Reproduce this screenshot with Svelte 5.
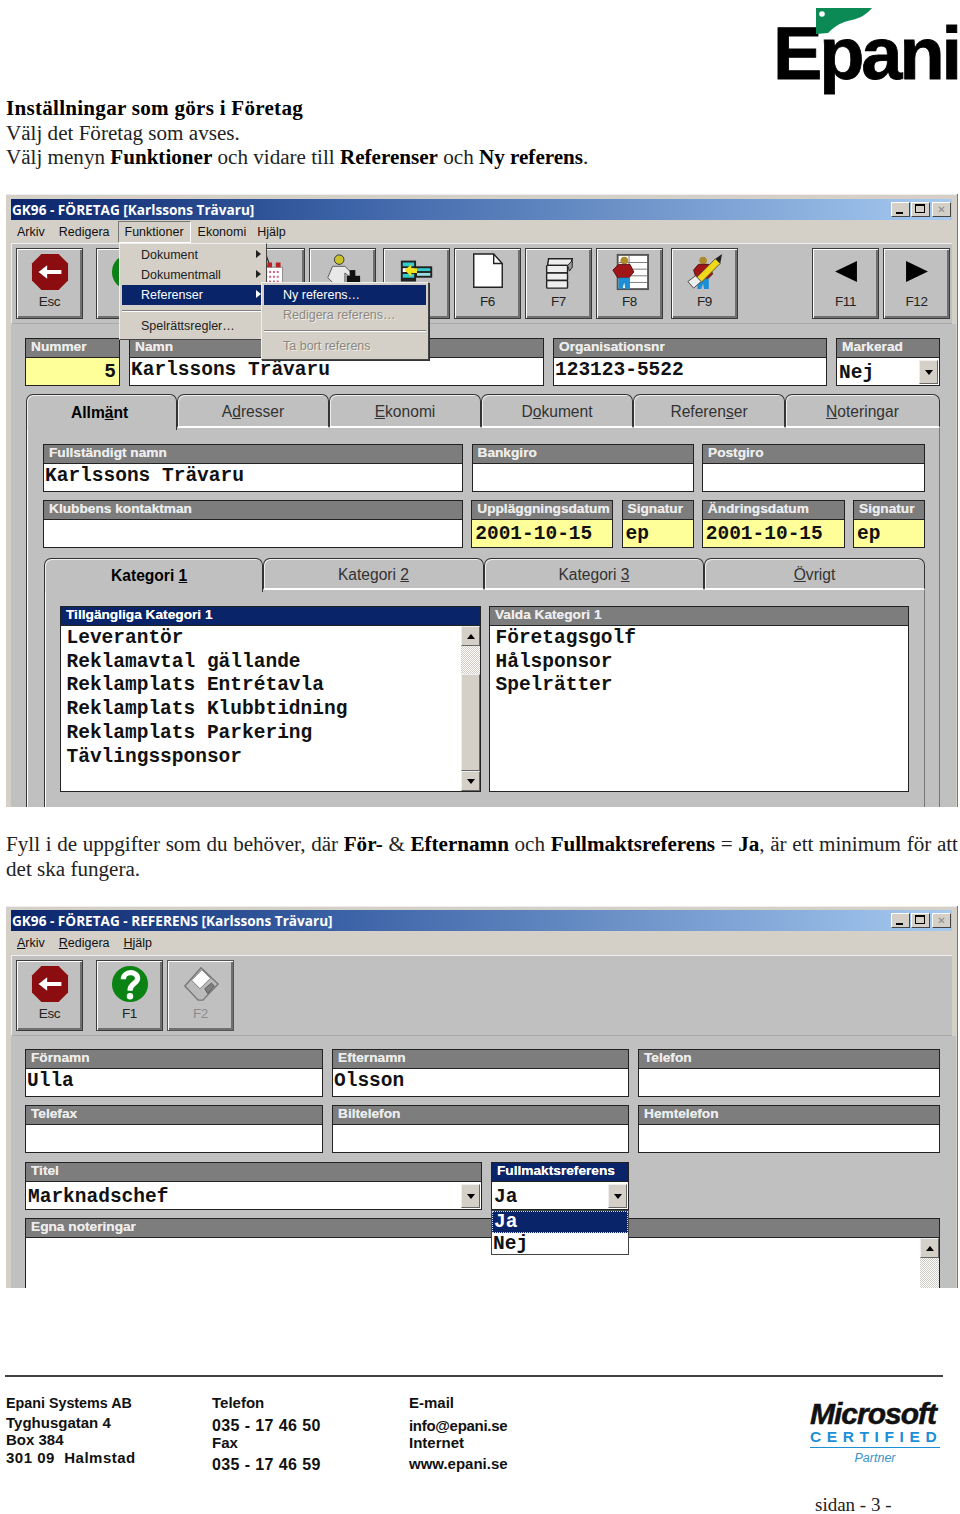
<script>
  const tb1 = [
    { k: 'Esc', i: 'esc', c: '' }, { k: '', i: 'help', c: 'sep' }, { k: '', i: 'disk', c: 'dis' },
    { k: '', i: 'cal', c: '' }, { k: '', i: 'man', c: '' }, { k: '', i: 'grid', c: 'm7' },
    { k: 'F6', i: 'page', c: '' }, { k: 'F7', i: 'stack', c: '' }, { k: 'F8', i: 'tbl', c: '' },
    { k: 'F9', i: 'pen', c: 'm4' }, { k: 'F11', i: 'left', c: 'far' }, { k: 'F12', i: 'right', c: '' }
  ];
  const tb2 = [
    { k: 'Esc', i: 'esc', c: '' }, { k: 'F1', i: 'help', c: 'sep' }, { k: 'F2', i: 'disk', c: 'dis' }
  ];
  const avail = ['Leverantör', 'Reklamavtal gällande', 'Reklamplats Entrétavla', 'Reklamplats Klubbtidning', 'Reklamplats Parkering', 'Tävlingssponsor'];
  const chosen = ['Företagsgolf', 'Hålsponsor', 'Spelrätter'];
</script>

{#snippet icon(n)}
  <svg class="ico" viewBox="0 0 40 40" aria-hidden="true">
    {#if n === 'esc'}
      <polygon points="11,1 29,1 39,11 39,29 29,39 11,39 1,29 1,11" fill="#8b0d10" />
      <path d="M8 20 L17 13 V18 H32 V22 H17 V27 Z" fill="#fff" />
    {:else if n === 'help'}
      <circle cx="20" cy="20" r="19" fill="#0b8214" />
      <path d="M13 15 C13 6 28 6 28 14 C28 20 20 19 20 27" fill="none" stroke="#fff" stroke-width="5.5" />
      <circle cx="20" cy="33" r="3.4" fill="#fff" />
    {:else if n === 'disk'}
      <polygon points="20,3 38,20 22,37 17,37 3,22" fill="#bbb" stroke="#777" stroke-width="1.5" />
      <polygon points="21,5 30,14 19,25 10,16" fill="#fff" stroke="#777" />
      <polygon points="24,25 31,19 34,22 27,30" fill="#808080" stroke="#555" />
    {:else if n === 'cal'}
      <path d="M4 3 H14 L18 14 H6 Z" fill="#ddd" stroke="#333" stroke-width="1.5" />
      <rect x="7" y="15" width="24" height="18" fill="#fff" stroke="#888" />
      <path d="M9 20 H29 M9 25 H29 M9 30 H29" stroke="#d35a7a" stroke-width="2" stroke-dasharray="2 2" />
      <rect x="15" y="10" width="5" height="5" fill="#b22" /><rect x="24" y="10" width="5" height="5" fill="#b22" />
    {:else if n === 'man'}
      <circle cx="16" cy="7" r="5" fill="#c9c22a" stroke="#333" />
      <path d="M9 14 H22 L30 22 L27 25 L22 21 V32 H10 L4 26 Z" fill="#e8e8e8" stroke="#555" />
      <rect x="12" y="31" width="12" height="7" fill="#3c7fd0" />
      <rect x="24" y="24" width="14" height="14" fill="#111" /><rect x="27" y="18" width="6" height="7" fill="#111" />
    {:else if n === 'grid'}
      <rect x="3" y="8" width="16" height="22" fill="#222" />
      <rect x="5" y="10" width="12" height="4" fill="#3cc" /><rect x="5" y="16" width="12" height="4" fill="#fff" /><rect x="5" y="22" width="12" height="4" fill="#3cc" />
      <rect x="18" y="14" width="18" height="12" fill="#222" />
      <rect x="20" y="16" width="14" height="3" fill="#3cc" /><rect x="20" y="21" width="14" height="3" fill="#9dd" />
      <path d="M7 18 L14 12 V16 H20 V21 H14 V25 Z" fill="#f2e21c" />
    {:else if n === 'page'}
      <path d="M5 1 H26 L35 11 V36 H5 Z" fill="#fff" stroke="#222" stroke-width="1.5" />
      <path d="M26 1 V11 H35" fill="none" stroke="#222" stroke-width="1.5" />
    {:else if n === 'stack'}
      <path d="M9 6 H34 L32 13 H8 Z" fill="#eee" stroke="#222" stroke-width="1.5" />
      <rect x="7" y="13" width="22" height="8" rx="1" fill="#eee" stroke="#222" stroke-width="1.5" />
      <rect x="7" y="21" width="22" height="8" rx="1" fill="#eee" stroke="#222" stroke-width="1.5" />
      <rect x="7" y="29" width="22" height="8" rx="1" fill="#eee" stroke="#222" stroke-width="1.5" />
      <path d="M29 13 L34 8 V15 L31 19 Z" fill="#999" stroke="#222" />
    {:else if n === 'tbl'}
      <rect x="6" y="1" width="34" height="38" fill="#555" />
      <rect x="8" y="3" width="30" height="34" fill="#fff" />
      <path d="M8 10 H38 M8 17 H38 M8 24 H38 M8 31 H38 M19 3 V37" stroke="#777" />
      <circle cx="14" cy="8" r="4" fill="#b08a2a" />
      <path d="M2 18 L8 12 H20 L24 20 L19 26 H7 Z" fill="#a01518" stroke="#511" />
      <path d="M8 26 H20 V38 H15 L14 31 L12 38 H8 Z" fill="#1b8fd6" />
    {:else if n === 'pen'}
      <circle cx="18" cy="8" r="4" fill="#b08a2a" />
      <path d="M8 18 L13 12 H24 L28 22 L23 27 H11 Z" fill="#a01518" stroke="#511" />
      <path d="M12 27 H24 V38 H19 L18 32 L16 38 H12 Z" fill="#1b8fd6" />
      <path d="M11 26 L31 6 L36 11 L16 31 Z" fill="#f2d81c" stroke="#553" />
      <path d="M31 6 L38 1 L36 11 Z" fill="#222" />
      <path d="M2 30 L10 24 L16 30 L8 37 Z" fill="#eee" stroke="#444" />
    {:else if n === 'left'}
      <polygon points="8.5,19.5 31.5,8.5 31.5,30.5" fill="#000" />
    {:else if n === 'right'}
      <polygon points="8.5,8.5 31.5,19.5 8.5,30.5" fill="#000" />
    {/if}
  </svg>
{/snippet}

{#snippet toolbar(items)}
  <div class="toolbar">
    {#each items as b}
      <div class="btn {b.c}">
        {@render icon(b.i)}
        {#if b.k}<span class="key">{b.k}</span>{/if}
      </div>
    {/each}
  </div>
{/snippet}

{#snippet titlebar(t)}
  <div class="title">
    <span>{t}</span>
    <div class="caps">
      <span class="cap"><i class="c-min"></i></span>
      <span class="cap"><i class="c-max"></i></span>
      <span class="cap x">✕</span>
    </div>
  </div>
{/snippet}

{#snippet arrow()}
  <span class="drop"><i></i></span>
{/snippet}

{#snippet field(label, value = '', cls = '')}
  <div class="field {cls}">
    <div class="lab">{label}</div>
    <div class="val">{value}</div>
  </div>
{/snippet}

<div class="page">
  <header class="head">
    <div class="logo">
      <svg class="flag" viewBox="0 0 56 26" aria-hidden="true">
        <path d="M0 0 H56 C50 7 44 10 36 12 C26 14 20 17 12 25 L0 26 Z" fill="#0c8a55" />
        <circle cx="6" cy="6" r="2.8" fill="#fff" />
      </svg>
      <span class="logotext">Epani</span>
    </div>
  </header>

  <div class="prose intro">
    <div class="lead"><b>Inställningar som görs i Företag</b></div>
    <div>Välj det Företag som avses.</div>
    <div>Välj menyn <b>Funktioner</b> och vidare till <b>Referenser</b> och <b>Ny referens</b>.</div>
  </div>

  <section class="win w1">
    {@render titlebar('GK96 - FÖRETAG [Karlssons Trävaru]')}
    <div class="menubar">
      <span>Arkiv</span><span>Redigera</span><span class="open">Funktioner</span><span class="eko">Ekonomi</span><span>Hjälp</span>
    </div>
    {@render toolbar(tb1)}

    <div class="body">
      <div class="row r-top">
        {@render field('Nummer', '5', 'yellow right')}
        {@render field('Namn', 'Karlssons Trävaru')}
        {@render field('Organisationsnr', '123123-5522')}
        <div class="field">
          <div class="lab">Markerad</div>
          <div class="val combo">Nej{@render arrow()}</div>
        </div>
      </div>

      <div class="tabs big">
        <div class="tab on"><span>Allm<u>ä</u>nt</span></div>
        <div class="tab"><span>A<u>d</u>resser</span></div>
        <div class="tab"><span><u>E</u>konomi</span></div>
        <div class="tab"><span>D<u>o</u>kument</span></div>
        <div class="tab"><span>Referen<u>s</u>er</span></div>
        <div class="tab"><span><u>N</u>oteringar</span></div>
      </div>
      <div class="tabpanel outer">
        <div class="row r-a">
          {@render field('Fullständigt namn', 'Karlssons Trävaru')}
          {@render field('Bankgiro')}
          {@render field('Postgiro')}
        </div>
        <div class="row r-b">
          {@render field('Klubbens kontaktman')}
          {@render field('Uppläggningsdatum', '2001-10-15', 'yellow')}
          {@render field('Signatur', 'ep', 'yellow')}
          {@render field('Ändringsdatum', '2001-10-15', 'yellow')}
          {@render field('Signatur', 'ep', 'yellow')}
        </div>
        <div class="tabs small">
          <div class="tab on"><span>Kategori <u>1</u></span></div>
          <div class="tab"><span>Kategori <u>2</u></span></div>
          <div class="tab"><span>Kategori <u>3</u></span></div>
          <div class="tab"><span><u>Ö</u>vrigt</span></div>
        </div>
        <div class="tabpanel inner">
          <div class="lists">
            <div class="list">
              <div class="lab navy">Tillgängliga Kategori 1</div>
              <div class="listbody">
                <div class="items">
                  {#each avail as a}<div>{a}</div>{/each}
                </div>
                <div class="scroll">
                  <span class="sb"><i class="up"></i></span>
                  <span class="dither d1"></span>
                  <span class="thumb"></span>
                  <span class="sb"><i></i></span>
                </div>
              </div>
            </div>
            <div class="list">
              <div class="lab">Valda Kategori 1</div>
              <div class="listbody">
                <div class="items">
                  {#each chosen as a}<div>{a}</div>{/each}
                </div>
              </div>
            </div>
          </div>
        </div>
      </div>
    </div>

    <div class="menu m-main">
      <div class="mi">Dokument<i class="tri"></i></div>
      <div class="mi">Dokumentmall<i class="tri"></i></div>
      <div class="mi sel">Referenser<i class="tri"></i></div>
      <hr />
      <div class="mi">Spelrättsregler…</div>
    </div>
    <div class="menu m-sub">
      <div class="mi sel">Ny referens…</div>
      <div class="mi off">Redigera referens…</div>
      <hr />
      <div class="mi off">Ta bort referens</div>
    </div>
  </section>

  <div class="prose second">
    <div class="just">Fyll i de uppgifter som du behöver, där <b>För-</b> &amp; <b>Efternamn</b> och <b>Fullmaktsreferens</b> = <b>Ja</b>, är ett minimum för att</div>
    <div>det ska fungera.</div>
  </div>

  <section class="win w2">
    {@render titlebar('GK96 - FÖRETAG - REFERENS [Karlssons Trävaru]')}
    <div class="menubar tall">
      <span><u>A</u>rkiv</span><span><u>R</u>edigera</span><span><u>H</u>jälp</span>
    </div>
    {@render toolbar(tb2)}

    <div class="body b2">
      <div class="row r-3">
        {@render field('Förnamn', 'Ulla')}
        {@render field('Efternamn', 'Olsson')}
        {@render field('Telefon')}
      </div>
      <div class="row r-3 r-3b">
        {@render field('Telefax')}
        {@render field('Biltelefon')}
        {@render field('Hemtelefon')}
      </div>
      <div class="row r-2">
        <div class="field">
          <div class="lab">Titel</div>
          <div class="val combo">Marknadschef{@render arrow()}</div>
        </div>
        <div class="field dd-host">
          <div class="lab navy">Fullmaktsreferens</div>
          <div class="val combo">Ja{@render arrow()}</div>
          <div class="ddlist">
            <div class="ddsel">Ja</div>
            <div>Nej</div>
          </div>
        </div>
      </div>
      <div class="field notes">
        <div class="lab">Egna noteringar</div>
        <div class="val notesbody">
          <div class="scroll s2">
            <span class="sb"><i class="up"></i></span>
            <span class="dither"></span>
          </div>
        </div>
      </div>
    </div>
  </section>

  <hr class="rule" />
  <footer class="foot">
    <div class="col c1">
      <div class="co">Epani Systems AB</div>
      <div>Tyghusgatan 4</div>
      <div>Box 384</div>
      <div class="city">301 09&nbsp; Halmstad</div>
    </div>
    <div class="col c2">
      <div>Telefon</div>
      <div class="num">035 - 17 46 50</div>
      <div>Fax</div>
      <div class="num">035 - 17 46 59</div>
    </div>
    <div class="col c2">
      <div>E-mail</div>
      <div class="mail">info@epani.se</div>
      <div>Internet</div>
      <div>www.epani.se</div>
    </div>
    <div class="ms">
      <div class="ms-name">Microsoft</div>
      <div class="ms-cert">CERTIFIED</div>
      <div class="ms-part">Partner</div>
    </div>
  </footer>
  <div class="sidan">sidan - 3 -</div>
</div>

<style>
  :global(body) { margin: 0; background: #fff; }
  .page { width: 960px; height: 1514px; overflow: hidden; position: relative; font-family: "Liberation Sans", Arial, sans-serif; color: #000; }

  .head { height: 96px; box-sizing: border-box; padding: 7px 2px 0 0; display: flex; justify-content: flex-end; }
  .logo { position: relative; width: 184px; height: 89px; }
  .logotext { display: block; font: bold 74px/89px "Liberation Sans", Arial, sans-serif; letter-spacing: -3.1px; padding-top: 2px; margin-left: -1px; white-space: nowrap; -webkit-text-stroke: .8px #000; }
  .flag { position: absolute; left: 42px; top: 1px; width: 56px; height: 26px; z-index: 1; }

  .prose { font: 21.1px/24.5px "Liberation Serif", "Times New Roman", serif; color: #222; padding-left: 6px; width: 952px; }
  .prose b { color: #000; }
  .lead { letter-spacing: .26px; }
  .intro { height: 73px; margin-bottom: 25px; }
  .second { margin-top: 25px; height: 48px; }
  .just { text-align: justify; text-align-last: justify; white-space: nowrap; }

  .win { position: relative; margin-left: 6px; width: 952px; box-sizing: border-box; background: #d4d0c8; padding: 5px 1px 0 5px; overflow: hidden; border-right: 1px solid #777; box-shadow: inset 0 1px 0 #eee; }
  .w1 { height: 613px; }
  .w2 { height: 382px; margin-top: 26px; padding-top: 4px; }

  .title { height: 21px; margin-right: 4px; background: linear-gradient(90deg, #0a246a 0%, #3b62a6 35%, #a6caf0 100%); color: #fff; font: bold 13.6px/21px "Open Sans", "DejaVu Sans", sans-serif; padding-left: 1px; display: flex; justify-content: space-between; align-items: center; white-space: nowrap; }
  .caps { display: flex; gap: 1px; margin-right: 1px; }
  .cap { width: 19px; height: 15px; box-sizing: border-box; background: #d4d0c8; border: 1px solid; border-color: #fff #444 #444 #fff; position: relative; display: flex; align-items: center; justify-content: center; font: 10px/1 "DejaVu Sans", sans-serif; color: #000; }
  .cap.x { color: #8a8a8a; margin-left: 1px; }
  .c-min { position: absolute; left: 4px; bottom: 2px; width: 7px; height: 2px; background: #000; }
  .c-max { position: absolute; left: 3px; top: 1px; width: 10px; height: 9px; box-sizing: border-box; border: 1px solid #000; border-top-width: 2px; }

  .menubar { height: 23px; display: flex; align-items: center; font-size: 12.5px; color: #111; background: #d4d0c8; }
  .menubar.tall { height: 24px; }
  .menubar span { padding: 0 7px; line-height: 22px; }
  .menubar span:first-child { margin-left: -1px; }
  .menubar .open { box-sizing: border-box; height: 22px; margin: 1px 0 0 1px; border: 1px solid; border-color: #777 #fff #fff #777; padding: 0 6px; line-height: 21px; }
  .menubar .eko { padding-right: 4px; }

  .toolbar { height: 81px; box-sizing: border-box; background: #c0c0c0; border-top: 1px solid #eee; border-bottom: 1px solid #aaa; border-left: 1px solid #eee; margin-right: 4px; padding: 4px 0 0 4px; display: flex; gap: 4px; }
  .btn { width: 67px; height: 71px; box-sizing: border-box; flex: none; background: #c0c0c0; border: 1px solid #3a3a3a; box-shadow: inset 1px 1px 0 #fff, inset -2px -2px 0 #6f6f6f; display: flex; flex-direction: column; align-items: center; padding-top: 4px; }
  .btn.sep { margin-left: 9px; }
  .btn.m7 { margin-left: 3px; }
  .btn.m4 { margin-left: 4px; }
  .btn.far { margin-left: 70px; }
  .ico { width: 38px; height: 38px; flex: none; }
  .key { font-size: 13.5px; line-height: 18px; margin-top: 2px; color: #222; letter-spacing: -.4px; }
  .btn.dis .key { color: #8c8c8c; }
  .btn.dis { border-color: #555; }

  .body { background: #c0c0c0; padding: 14px 0 0 14px; height: 483px; box-sizing: border-box; }
  .b2 { height: 252px; padding-top: 13px; overflow: hidden; }

  .row { display: grid; column-gap: 9px; }
  .r-top { grid-template-columns: 95px 415px 274px 104px; margin-bottom: 8px; }
  .r-a { grid-template-columns: 420px 222px 223px; column-gap: 8.5px; margin-bottom: 8px; }
  .r-b { grid-template-columns: 420px 142px 72px 143px 72px; column-gap: 8.25px; }
  .r-3 { grid-template-columns: 298px 297px 302px; margin-bottom: 8px; }
  .r-3b { margin-bottom: 9px; }
  .r-2 { grid-template-columns: 457px 138px; margin-bottom: 8px; }

  .field { box-sizing: border-box; height: 48px; border: 1px solid #222; background: #fff; display: flex; flex-direction: column; }
  .lab { height: 18px; flex: none; background: #7d7d7d; border-bottom: 1px solid #222; color: #ececec; font-size: 13.7px; font-weight: bold; line-height: 16px; padding-left: 5px; white-space: nowrap; text-shadow: 0 0 .5px #ddd; }
  .lab.navy { background: #0a246a; color: #fff; }
  .val { flex: 1; font: bold 19.5px/24px "Liberation Mono", "Courier New", monospace; color: #111; padding-left: 1px; white-space: nowrap; position: relative; }
  .yellow .val { background: #ffff99; padding: 2px 0 0 3px; }
  .yellow.right .val { text-align: right; padding: 2px 3px 0 0; }
  .val.combo { padding: 3px 0 0 2px; }
  .drop { position: absolute; right: 1px; top: 2px; width: 19px; height: 24px; box-sizing: border-box; background: #d4d0c8; border: 1px solid; border-color: #eee #666 #666 #eee; display: flex; align-items: center; justify-content: center; }
  .drop i { border-left: 4px solid transparent; border-right: 4px solid transparent; border-top: 5px solid #000; }

  .tabs { display: grid; }
  .big { grid-template-columns: 151px 152px 152px 152px 152px 155px; height: 34px; width: 914px; margin-left: 1px; position: relative; }
  .small { grid-template-columns: 219px 221px 220px 221px; height: 32px; width: 881px; margin: 10px 0 0 1px; }
  .tab { box-sizing: border-box; height: 100%; border: 1px solid #333; border-radius: 7px 7px 0 0; border-bottom: 2px solid #fff; background: #c0c0c0; box-shadow: inset 1px 1px 0 #eee; display: flex; align-items: center; justify-content: center; font-size: 15.6px; color: #333; padding-top: 2px; }
  .tab.on { border-bottom: 0; color: #000; font-weight: bold; justify-content: flex-start; padding: 0 0 0 44px; height: calc(100% + 2px); position: relative; z-index: 1; }
  .small .tab.on { padding-left: 66px; }

  .tabpanel { box-sizing: border-box; border-left: 1px solid #333; box-shadow: inset 1px 0 0 #fff; }
  .outer { width: 914px; margin-left: 1px; padding: 16px 0 0 16px; border-right: 1px solid #777; height: 400px; }
  .inner { width: 881px; margin-left: 1px; padding: 16px 0 0 15px; border-right: 1px solid #777; height: 230px; }

  .lists { display: grid; grid-template-columns: 421px 420px; column-gap: 8px; }
  .list { height: 186px; box-sizing: border-box; border: 1px solid #222; background: #fff; display: flex; flex-direction: column; }
  .listbody { flex: 1; display: flex; min-height: 0; }
  .items { flex: 1; font: bold 19.5px/23.7px "Liberation Mono", "Courier New", monospace; color: #111; padding: 1px 0 0 5.5px; white-space: nowrap; }
  .scroll { width: 19px; flex: none; display: flex; flex-direction: column; background: #d4d0c8; }
  .sb { height: 20px; flex: none; box-sizing: border-box; background: #d4d0c8; border: 1px solid; border-color: #eee #666 #666 #eee; display: flex; align-items: center; justify-content: center; }
  .sb i { border-left: 4px solid transparent; border-right: 4px solid transparent; border-top: 5px solid #000; }
  .sb i.up { border-top: 0; border-bottom: 5px solid #000; }
  .dither { flex: 1; background: repeating-conic-gradient(#fff 0 25%, #cfcbc3 0 50%) 0 0 / 2px 2px; }
  .dither.d1 { flex: none; height: 28px; }
  .thumb { flex: 1; background: #d4d0c8; border: 1px solid; border-color: #eee #666 #666 #eee; }

  .menu { position: absolute; z-index: 5; box-sizing: border-box; background: #d4d0c8; border: 1px solid; border-color: #eee #444 #444 #eee; font-size: 12.5px; color: #222; padding: 2px 2px; }
  .menu hr { border: 0; height: 2px; margin: 4.5px 0; background: linear-gradient(#808080 50%, #fff 50%); }
  .mi { height: 20px; line-height: 20px; padding-left: 19px; position: relative; white-space: nowrap; }
  .mi.sel { background: #0a246a; color: #fff; }
  .mi.off { color: #8b8880; text-shadow: 1px 1px 0 #f0eee8; }
  .tri { position: absolute; right: 3px; top: 5px; border-top: 4px solid transparent; border-bottom: 4px solid transparent; border-left: 5px solid currentColor; }
  .m-main { left: 113px; top: 49px; width: 148px; height: 97px; padding-top: 1px; }
  .m-sub { left: 255px; top: 88px; width: 168px; height: 78px; box-shadow: 1px 1px 0 #333; }

  .dd-host { position: relative; }
  .ddlist { position: absolute; z-index: 3; left: 0; top: 47px; width: 138px; margin-left: -1px; box-sizing: border-box; background: #fff; border: 1px solid #444; font: bold 19.5px/22px "Liberation Mono", "Courier New", monospace; color: #111; padding-left: 1px; height: 45px; }
  .ddsel { background: #0a246a; color: #fff; outline: 1px dotted #cfd8ee; outline-offset: -1px; margin-left: -1px; padding-left: 2px; }
  .notes { width: 915px; height: 80px; }
  .notesbody { display: flex; justify-content: flex-end; }
  .s2 { height: 100%; }

  .rule { border: 0; margin: 87px 0 0 5px; width: 938px; height: 2px; background: #444; }
  .foot { height: 118px; box-sizing: border-box; padding: 18px 0 0 6px; display: grid; grid-template-columns: 206px 197px 401px 132px; font-size: 15px; font-weight: bold; color: #111; }
  .col { display: grid; align-content: start; line-height: 16px; white-space: nowrap; }
  .c1 { grid-template-rows: 20px 17px 18px 16px; }
  .c2 { grid-template-rows: 22px 18px 21px 16px; }
  .co { font-size: 14.3px; }
  .city { letter-spacing: .5px; }
  .num { font-size: 16px; letter-spacing: .4px; padding-top: 1px; }
  .mail { letter-spacing: -.3px; padding-top: 1px; }
  .ms { margin-top: 7px; width: 130px; }
  .ms-name { font: italic bold 30px/24px "Liberation Sans", Arial, sans-serif; letter-spacing: -1px; color: #111; white-space: nowrap; -webkit-text-stroke: .5px #111; }
  .ms-cert { font-size: 15.5px; line-height: 20px; letter-spacing: 5.6px; color: #1c8fd6; border-bottom: 1px solid #1c8fd6; height: 20px; margin-top: 1px; white-space: nowrap; }
  .ms-part { font: italic 12.5px/18px "Liberation Sans", Arial, sans-serif; color: #3a92cc; text-align: center; margin-top: 1px; }
  .sidan { font: 19px/20px "Liberation Serif", "Times New Roman", serif; padding-left: 815px; color: #222; }
</style>
